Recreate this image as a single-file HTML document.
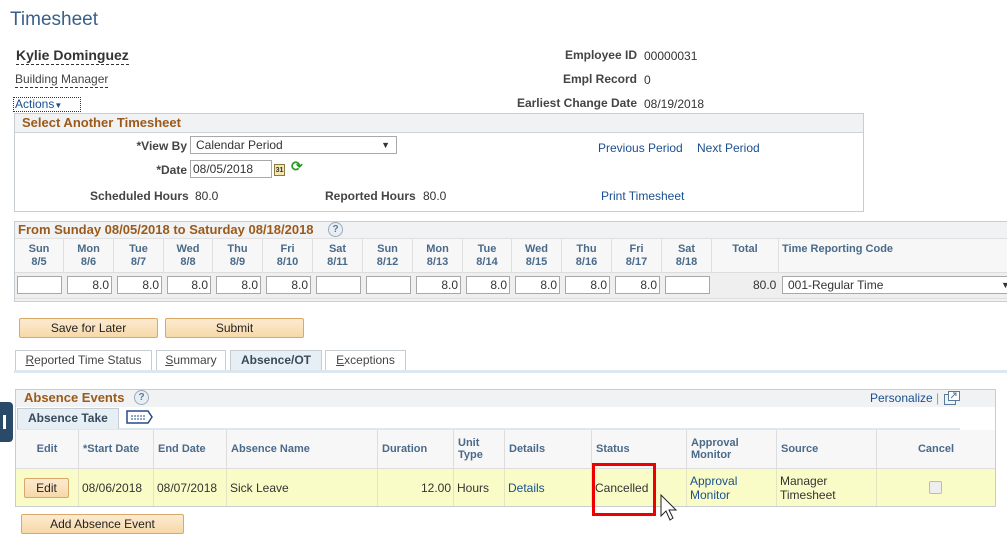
<!DOCTYPE html><html><head><style>
*{box-sizing:border-box}body{margin:0;width:1007px;height:534px;background:#fff;font-family:"Liberation Sans",Arial,sans-serif;font-size:12px;color:#333;position:relative;overflow:hidden}
.a{position:absolute;white-space:nowrap}
.lbl{color:#333;font-weight:bold;color:#444}
.lnk{color:#1a4f91}
.inp{position:absolute;height:18px;border:1px solid #a8a8a8;background:#fff;font-size:12px;text-align:right;padding:1px 2px;line-height:14px;color:#333}
.btn{position:absolute;height:20px;border:1px solid #d9a86a;border-radius:2px;background:linear-gradient(#fcebd0,#f7d8a8);text-align:center;line-height:18px;font-size:12px;color:#222}
.hd{position:absolute;font-weight:bold;color:#9c5a1a;font-size:13px}
.dh{position:absolute;top:238px;height:34px;border-right:1px solid #e0e0e0;text-align:center;font-weight:bold;color:#4a6a8a;font-size:11px;line-height:13px;padding-top:5px}
.ch{position:absolute;top:430px;height:38px;border-right:1px solid #ddd;font-weight:bold;color:#4a6a8a;font-size:11px;line-height:12px;display:flex;align-items:center;padding-left:4px}
.cd{position:absolute;top:469px;height:37px;border-right:1px solid #e4e4c0;display:flex;align-items:center;padding-left:3px;font-size:12px}
.tab{position:absolute;top:350px;height:20px;border:1px solid #c8cdd2;border-bottom:none;background:#fff;text-align:center;line-height:18px;font-size:12px;color:#444}
</style></head><body>
<div class="a" style="left:10px;top:9px;font-size:19px;color:#3a5f8a">Timesheet</div>
<div class="a" style="left:16px;top:47px;font-size:14px;font-weight:bold;color:#333;border-bottom:1px dashed #333;line-height:17px">Kylie Dominguez</div>
<div class="a" style="left:15px;top:72px;color:#444;border-bottom:1px dashed #333;line-height:15px">Building Manager</div>
<div class="a lnk" style="left:13px;top:97px;border:1px dotted #333;width:68px;height:15px;line-height:13px;padding-left:1px">Actions<span style="font-size:8px">▼</span></div>
<div class="a lbl" style="right:370px;top:48px">Employee ID</div><div class="a" style="left:644px;top:49px">00000031</div>
<div class="a lbl" style="right:370px;top:72px">Empl Record</div><div class="a" style="left:644px;top:73px">0</div>
<div class="a lbl" style="right:370px;top:96px">Earliest Change Date</div><div class="a" style="left:644px;top:97px">08/19/2018</div>

<div class="a" style="left:14px;top:113px;width:850px;height:99px;border:1px solid #c8cdd2"></div>
<div class="a" style="left:15px;top:114px;width:848px;height:19px;background:#f0f2f3;border-bottom:1px solid #d0d4d8"></div>
<div class="hd" style="left:22px;top:115px">Select Another Timesheet</div>
<div class="a lbl" style="right:820px;top:139px;font-size:12px">*View By</div>
<div class="a" style="left:190px;top:136px;width:207px;height:18px;border:1px solid #a8a8a8;padding:1px 5px;line-height:14px">Calendar Period<span style="position:absolute;right:6px;font-size:9px">▼</span></div>
<div class="a lbl" style="right:820px;top:163px">*Date</div>
<div class="inp" style="left:190px;top:160px;width:82px;text-align:left">08/05/2018</div>
<div class="a" style="left:274px;top:164px;width:11px;height:12px;border:1px solid #8a7a40;background:#f4e6b0;font-size:7px;font-weight:bold;line-height:11px;text-align:center">31</div>
<div class="a" style="left:291px;top:158px;color:#2a9a2a;font-size:14px;font-weight:bold">⟳</div>
<div class="a lbl" style="left:90px;top:189px">Scheduled Hours</div><div class="a" style="left:195px;top:189px">80.0</div>
<div class="a lbl" style="left:325px;top:189px">Reported Hours</div><div class="a" style="left:423px;top:189px">80.0</div>
<div class="a lnk" style="left:598px;top:141px">Previous Period</div><div class="a lnk" style="left:697px;top:141px">Next Period</div>
<div class="a lnk" style="left:601px;top:189px">Print Timesheet</div>

<div class="a" style="left:14px;top:221px;width:1000px;height:81px;border:1px solid #c8cdd2;background:#f0f2f3"></div>
<div class="a" style="left:15px;top:238px;width:1000px;height:34px;background:#f7f7f7;border-top:1px solid #e0e0e0"></div>
<div class="a" style="left:15px;top:272px;width:1000px;height:27px;background:#efefef;border-top:1px solid #ddd;border-bottom:1px solid #ddd"></div>
<div class="hd" style="left:18px;top:222px">From Sunday 08/05/2018 to Saturday 08/18/2018</div>
<div class="a" style="left:328px;top:222px;width:15px;height:15px;border-radius:50%;border:1px solid #9ab;background:#e8eef4;color:#5a7a9a;font-size:10px;font-weight:bold;text-align:center;line-height:13px">?</div>
<div class="dh" style="left:15px;width:49px">Sun<br>8/5</div>
<div class="dh" style="left:64px;width:50px">Mon<br>8/6</div>
<div class="dh" style="left:114px;width:50px">Tue<br>8/7</div>
<div class="dh" style="left:164px;width:49px">Wed<br>8/8</div>
<div class="dh" style="left:213px;width:50px">Thu<br>8/9</div>
<div class="dh" style="left:263px;width:50px">Fri<br>8/10</div>
<div class="dh" style="left:313px;width:50px">Sat<br>8/11</div>
<div class="dh" style="left:363px;width:50px">Sun<br>8/12</div>
<div class="dh" style="left:413px;width:50px">Mon<br>8/13</div>
<div class="dh" style="left:463px;width:49px">Tue<br>8/14</div>
<div class="dh" style="left:512px;width:50px">Wed<br>8/15</div>
<div class="dh" style="left:562px;width:50px">Thu<br>8/16</div>
<div class="dh" style="left:612px;width:50px">Fri<br>8/17</div>
<div class="dh" style="left:662px;width:50px">Sat<br>8/18</div>
<div class="dh" style="left:712px;width:67px">Total</div>
<div class="dh" style="left:779px;width:230px;text-align:left;padding-left:3px">Time Reporting Code</div>
<div class="inp" style="left:17px;top:276px;width:45px"></div>
<div class="inp" style="left:67px;top:276px;width:45px">8.0</div>
<div class="inp" style="left:117px;top:276px;width:45px">8.0</div>
<div class="inp" style="left:167px;top:276px;width:44px">8.0</div>
<div class="inp" style="left:216px;top:276px;width:45px">8.0</div>
<div class="inp" style="left:266px;top:276px;width:45px">8.0</div>
<div class="inp" style="left:316px;top:276px;width:45px"></div>
<div class="inp" style="left:366px;top:276px;width:45px"></div>
<div class="inp" style="left:416px;top:276px;width:45px">8.0</div>
<div class="inp" style="left:466px;top:276px;width:44px">8.0</div>
<div class="inp" style="left:515px;top:276px;width:45px">8.0</div>
<div class="inp" style="left:565px;top:276px;width:45px">8.0</div>
<div class="inp" style="left:615px;top:276px;width:45px">8.0</div>
<div class="inp" style="left:665px;top:276px;width:45px"></div>
<div class="a" style="left:753px;top:278px">80.0</div>
<div class="inp" style="left:782px;top:276px;width:230px;text-align:left;padding-left:5px">001-Regular Time<span style="position:absolute;left:218px;font-size:9px">▼</span></div>

<div class="btn" style="left:19px;top:318px;width:139px">Save for Later</div>
<div class="btn" style="left:165px;top:318px;width:139px">Submit</div>
<div class="a" style="left:14px;top:370px;width:993px;height:3px;background:#dde7f0"></div>
<div class="tab" style="left:15px;width:137px"><u>R</u>eported Time Status</div>
<div class="tab" style="left:156px;width:70px"><u>S</u>ummary</div>
<div class="tab" style="left:230px;width:92px;background:#e6eef6;font-weight:bold;color:#3a4a5a">Absence/OT</div>
<div class="tab" style="left:325px;width:81px"><u>E</u>xceptions</div>

<div class="a" style="left:15px;top:389px;width:981px;height:118px;border:1px solid #c8cdd2"></div>
<div class="a" style="left:16px;top:390px;width:979px;height:17px;background:#f0f2f3"></div>
<div class="hd" style="left:24px;top:390px">Absence Events</div>
<div class="a" style="left:134px;top:390px;width:15px;height:15px;border-radius:50%;border:1px solid #9ab;background:#e8eef4;color:#5a7a9a;font-size:10px;font-weight:bold;text-align:center;line-height:13px">?</div>
<div class="a lnk" style="left:870px;top:391px">Personalize <span style="color:#999">|</span></div>
<svg class="a" style="left:944px;top:391px" width="16" height="14" viewBox="0 0 16 14"><rect x="0.5" y="3.5" width="11" height="10" fill="none" stroke="#5a7a9a"/><rect x="4.5" y="0.5" width="11" height="9" fill="#fff" stroke="#5a7a9a"/><path d="M7 7 L12 2 M9 2 H12 V5" stroke="#5a7a9a" fill="none"/></svg>
<div class="a" style="left:17px;top:428px;width:943px;height:3px;background:#dde7f0"></div>
<div class="a" style="left:17px;top:408px;width:102px;height:21px;border:1px solid #c8cdd2;border-bottom:none;background:#e6eef6;font-weight:bold;color:#3a4a5a;font-size:12px;line-height:19px;padding-left:10px">Absence Take</div>
<svg class="a" style="left:126px;top:410px" width="28" height="14" viewBox="0 0 28 14"><path d="M1 1 H22 L26 7 L22 13 H1 Z" fill="#fff" stroke="#2a4a8a" stroke-width="1.5"/><path d="M5 6 H19 M5 9 H19" stroke="#2a4a8a" stroke-dasharray="2 1"/></svg>
<div class="a" style="left:16px;top:430px;width:979px;height:39px;background:#f7f7f7;border-bottom:1px solid #ddd"></div>
<div class="ch" style="left:16px;width:63px;justify-content:center;padding:0">Edit</div>
<div class="ch" style="left:79px;width:75px">*Start Date</div>
<div class="ch" style="left:154px;width:73px">End Date</div>
<div class="ch" style="left:227px;width:151px">Absence Name</div>
<div class="ch" style="left:378px;width:76px">Duration</div>
<div class="ch" style="left:454px;width:51px">Unit<br>Type</div>
<div class="ch" style="left:505px;width:87px">Details</div>
<div class="ch" style="left:592px;width:95px">Status</div>
<div class="ch" style="left:687px;width:90px">Approval<br>Monitor</div>
<div class="ch" style="left:777px;width:100px">Source</div>
<div class="ch" style="left:877px;width:118px;justify-content:center;padding:0;border:none">Cancel</div>
<div class="a" style="left:16px;top:469px;width:979px;height:37px;background:#fafcc8"></div>
<div class="cd" style="left:16px;width:63px"></div>
<div class="btn" style="left:24px;top:478px;width:45px">Edit</div>
<div class="cd" style="left:79px;width:75px">08/06/2018</div>
<div class="cd" style="left:154px;width:73px">08/07/2018</div>
<div class="cd" style="left:227px;width:151px">Sick Leave</div>
<div class="cd" style="left:378px;width:76px;justify-content:flex-end;padding-right:2px">12.00</div>
<div class="cd" style="left:454px;width:51px">Hours</div>
<div class="cd" style="left:505px;width:87px;color:#1a4f91">Details</div>
<div class="cd" style="left:592px;width:95px">Cancelled</div>
<div class="cd" style="left:687px;width:90px;color:#1a4f91;line-height:14px">Approval<br>Monitor</div>
<div class="cd" style="left:777px;width:100px;line-height:14px">Manager<br>Timesheet</div>
<div class="a" style="left:929px;top:481px;width:13px;height:13px;border:1px solid #bbb;border-radius:2px;background:#eee"></div>
<div class="a" style="left:592px;top:463px;width:64px;height:53px;border:3px solid #e00"></div>
<svg class="a" style="left:660px;top:494px" width="20" height="30" viewBox="0 0 20 30"><path d="M1 1 L1 22 L6 17 L10 26 L13 24 L9 16 L16 16 Z" fill="#fff" stroke="#222" stroke-width="1"/></svg>
<div class="btn" style="left:21px;top:514px;width:163px">Add Absence Event</div>
<div class="a" style="left:0;top:402px;width:13px;height:40px;background:#2a4a6a;border-radius:0 4px 4px 0"><div style="position:absolute;left:3px;top:13px;width:3px;height:14px;background:#fff"></div></div>
</body></html>
